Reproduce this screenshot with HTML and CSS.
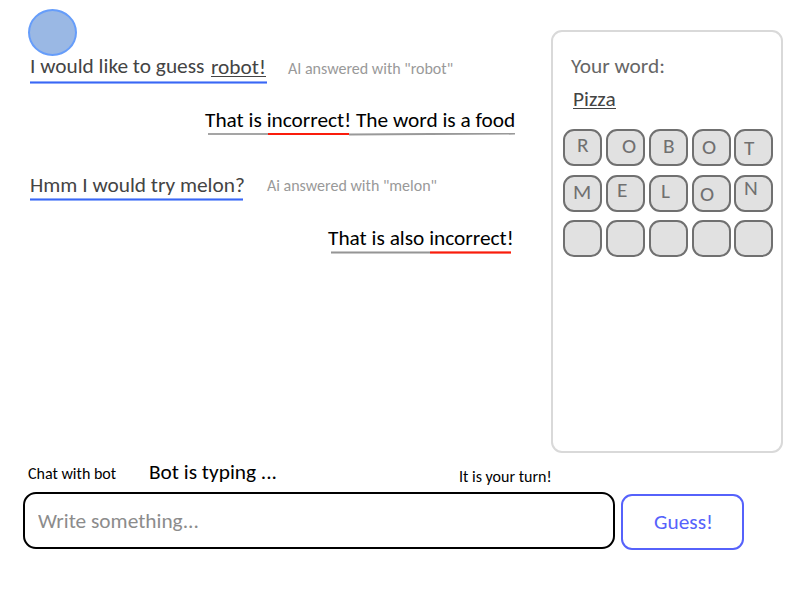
FILE: index.html
```html
<!DOCTYPE html>
<html lang="en">
<head>
<meta charset="utf-8">
<title>Word guess</title>
<link rel="stylesheet" href="styles.css">
</head>
<body>
<div class="top">
  <main class="chat">
    <div class="avatar"></div>
    <div class="row first">
      <div class="msg mine m1">
        <p class="text"><span class="lead">I would like to guess</span><span class="word">robot!</span></p>
        <div class="rule blue"></div>
      </div>
      <span class="note n1">AI answered with "robot"</span>
    </div>
    <div class="msg reply r1">
      <p class="text">That is incorrect! The word is a food</p>
      <div class="rules"><i class="g1"></i><i class="red1"></i><svg class="tail" viewBox="0 0 166 3"><path d="M0 1.4L166 0.6"/></svg></div>
    </div>
    <div class="row second">
      <div class="msg mine m2">
        <p class="text">Hmm I would try melon?</p>
        <div class="rule blue"></div>
      </div>
      <span class="note n2">Ai answered with "melon"</span>
    </div>
    <div class="msg reply r2">
      <p class="text">That is also incorrect!</p>
      <div class="rules"><i class="g2"></i><i class="red2"></i></div>
    </div>
  </main>
  <aside class="panel">
    <h2 class="title">Your word:</h2>
    <p class="answer"><span>Pizza</span></p>
    <div class="board">
      <div class="tile a1">R</div><div class="tile a2">O</div><div class="tile a3">B</div><div class="tile a4">O</div><div class="tile a5">T</div>
      <div class="tile b1">M</div><div class="tile b2">E</div><div class="tile b3">L</div><div class="tile b4">O</div><div class="tile b5">N</div>
      <div class="tile"></div><div class="tile"></div><div class="tile"></div><div class="tile"></div><div class="tile"></div>
    </div>
  </aside>
</div>
<div class="status">
  <span class="label">Chat with bot</span>
  <span class="typing">Bot is typing ...</span>
  <span class="turn">It is your turn!</span>
</div>
<div class="form">
  <input class="field" type="text" placeholder="Write something...">
  <button class="guess" type="button">Guess!</button>
</div>
</body>
</html>
```
FILE: styles.css
```css
* { box-sizing: border-box; margin: 0; padding: 0; }
body {
  width: 800px; height: 600px; overflow: hidden; background: #fff; color: #000;
  font-family: Carlito, Calibri, "Noto Sans", sans-serif; font-size: 21.33px; line-height: 24px;
  white-space: nowrap;
}
.top { display: flex; height: 453px; }
.chat { width: 551px; padding-top: 9px; }
.avatar { width: 49px; height: 47px; margin-left: 28px; border: 2px solid #669dfa; border-radius: 50%; background: #9ab8e4; }
.row { display: flex; margin-left: 30px; }
.first { margin-top: -2px; }
.mine { color: #444; }
.m1 { width: 237px; }
.m2 { width: 213px; }
.text { height: 27px; }
.mine .text { display: flex; }
.lead { width: 181px; }
.word { height: 23px; width: 55px; padding-top: 1px; border-bottom: 1px solid #444; }
.rule { height: 3px; border: solid #8fabfa; border-width: 1px 0; background: #3a66f5; }
.note { color: #999; font-size: 16px; }
.n1 { margin: 3px 0 0 21px; }
.n2 { margin: 1px 0 0 24px; }
.reply .text { height: 25px; }
.r1 { margin: 24px 0 0 205px; }
.r2 { margin: 25px 0 0 328px; }
.second { margin-top: 37px; }
.m2 .text { height: 25px; }
.rules { display: flex; height: 3px; margin-left: 3px; }
.rules i { height: 2px; background: #a5a5a5; }
.rules .g1 { width: 60px; }
.rules .red1 { width: 81px; background: #fa1c0c; }
.tail { width: 166px; height: 3px; fill: none; stroke: #999; stroke-width: 2; }
.rules .g2, .rules .red2 { height: 3px; border: solid #c8c8c8; border-width: 1px 0; }
.rules .g2 { width: 99px; background: #959595; }
.rules .red2 { width: 81px; border-color: #fa7468; background: #fa1c0c; }
.panel { width: 232px; height: 423px; margin-top: 30px; border: 2px solid #d9d9d9; border-radius: 11px; }
.title { margin: 22px 0 0 18px; font-size: 21.33px; font-weight: 400; color: #666; }
.answer { height: 24px; margin: 9px 0 0 20px; color: #444; }
.answer span { display: block; width: 43px; height: 22px; border-bottom: 1px solid #444; }
.board { display: grid; grid-template-columns: repeat(3, 43px) 42px 39px; grid-template-rows: 46px 45px 37px; margin: 18px 0 0 10px; }
.tile { width: 39px; height: 37px; border: 2px solid #707070; border-radius: 11px; background: #e1e1e1; color: #707070; line-height: 22px; }
.a1 { padding: 3px 0 0 12px; }
.a2 { padding: 4px 0 0 14px; }
.a3 { padding: 4px 0 0 12px; }
.a4 { padding: 5px 0 0 8px; }
.a5 { padding: 6px 0 0 8px; }
.b1 { padding: 4px 0 0 8px; }
.b2 { padding: 2px 0 0 9px; }
.b3 { padding: 3px 0 0 10px; }
.b4 { padding: 6px 0 0 6px; }
.b5 { padding: 0 0 0 8px; }
.status { display: flex; height: 39px; padding: 7px 0 0 28px; }
.label { width: 121px; padding-top: 2px; font-size: 16px; }
.typing { width: 310px; }
.turn { padding-top: 5px; font-size: 16px; }
.form { display: flex; margin-left: 23px; }
.field { width: 592px; height: 57px; padding: 0 13px; border: 2px solid #000; border-radius: 13px; background: #fff; font: inherit; }
.field::placeholder { color: #8c8c8c; opacity: 1; }
.guess { width: 123px; height: 56px; margin: 2px 0 0 6px; padding-left: 2px; border: 2px solid #5662fb; border-radius: 11px; background: #fff; color: #5662fb; font: inherit; }
```
